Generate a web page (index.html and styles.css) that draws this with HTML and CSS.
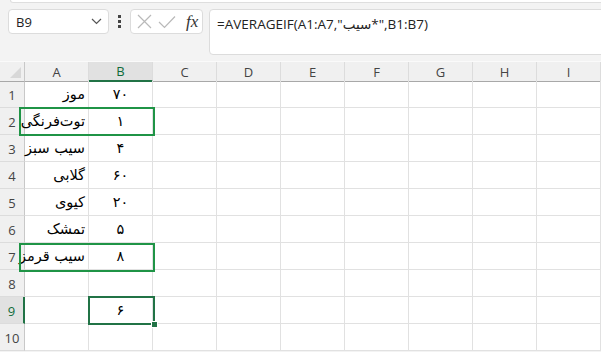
FILE: index.html
```html
<!DOCTYPE html>
<html lang="fa">
<head>
  <meta charset="UTF-8" />
  <title>AVERAGEIF</title>
  <link rel="stylesheet" href="styles.css">
</head>
<body>
  <div class="top-strip"></div>

  <div class="formula-bar">
    <div class="name-box">
      <span class="name-text">B9</span>
      <svg class="chevron" width="11" height="7" viewBox="0 0 11 7"><path d="M1 1 L5.5 5.5 L10 1" fill="none" stroke="#555" stroke-width="1.2"/></svg>
    </div>
    <div class="grip"><i></i><i></i><i></i></div>
    <div class="fx-box">
      <svg width="15" height="15" viewBox="0 0 15 15"><path d="M1 1 L14 14 M14 1 L1 14" stroke="#b9b9b9" stroke-width="1.2"/></svg>
      <svg width="18" height="14" viewBox="0 0 18 14"><path d="M1 7 L6.5 12.5 L17 1.5" fill="none" stroke="#b9b9b9" stroke-width="1.2"/></svg>
      <span class="fx">fx</span>
    </div>
    <div class="formula-input">=AVERAGEIF(A1:A7,"سیب*",B1:B7)</div>
  </div>

  <div class="sheet">
    <div class="row head">
      <div class="corner"><span class="tri"></span></div>
      <div class="ch">A</div>
      <div class="ch active">B</div>
      <div class="ch">C</div>
      <div class="ch">D</div>
      <div class="ch">E</div>
      <div class="ch">F</div>
      <div class="ch">G</div>
      <div class="ch">H</div>
      <div class="ch">I</div>
    </div>

    <div class="row">
      <div class="rh">1</div><div class="c a">موز</div><div class="c b">۷۰</div>
      <div class="c"></div><div class="c"></div><div class="c"></div><div class="c"></div><div class="c"></div><div class="c"></div><div class="c"></div>
    </div>
    <div class="row">
      <div class="rh">2</div><div class="c a">توت‌فرنگی</div><div class="c b">۱</div>
      <div class="c"></div><div class="c"></div><div class="c"></div><div class="c"></div><div class="c"></div><div class="c"></div><div class="c"></div>
    </div>
    <div class="row">
      <div class="rh">3</div><div class="c a">سیب سبز</div><div class="c b">۴</div>
      <div class="c"></div><div class="c"></div><div class="c"></div><div class="c"></div><div class="c"></div><div class="c"></div><div class="c"></div>
    </div>
    <div class="row">
      <div class="rh">4</div><div class="c a">گلابی</div><div class="c b">۶۰</div>
      <div class="c"></div><div class="c"></div><div class="c"></div><div class="c"></div><div class="c"></div><div class="c"></div><div class="c"></div>
    </div>
    <div class="row">
      <div class="rh">5</div><div class="c a">کیوی</div><div class="c b">۲۰</div>
      <div class="c"></div><div class="c"></div><div class="c"></div><div class="c"></div><div class="c"></div><div class="c"></div><div class="c"></div>
    </div>
    <div class="row">
      <div class="rh">6</div><div class="c a">تمشک</div><div class="c b">۵</div>
      <div class="c"></div><div class="c"></div><div class="c"></div><div class="c"></div><div class="c"></div><div class="c"></div><div class="c"></div>
    </div>
    <div class="row">
      <div class="rh">7</div><div class="c a">سیب قرمز</div><div class="c b">۸</div>
      <div class="c"></div><div class="c"></div><div class="c"></div><div class="c"></div><div class="c"></div><div class="c"></div><div class="c"></div>
    </div>
    <div class="row">
      <div class="rh">8</div><div class="c a"></div><div class="c b"></div>
      <div class="c"></div><div class="c"></div><div class="c"></div><div class="c"></div><div class="c"></div><div class="c"></div><div class="c"></div>
    </div>
    <div class="row">
      <div class="rh active">9</div><div class="c a"></div><div class="c b">۶</div>
      <div class="c"></div><div class="c"></div><div class="c"></div><div class="c"></div><div class="c"></div><div class="c"></div><div class="c"></div>
    </div>
    <div class="row">
      <div class="rh">10</div><div class="c a"></div><div class="c b"></div>
      <div class="c"></div><div class="c"></div><div class="c"></div><div class="c"></div><div class="c"></div><div class="c"></div><div class="c"></div>
    </div>

    <!-- drawn rectangles over the grid -->
    <div class="mark mark-row2"></div>
    <div class="mark mark-row7"></div>

    <!-- active cell B9 -->
    <div class="selection"><span class="handle"></span></div>
  </div>
</body>
</html>
```

FILE: styles.css
```css
* {
  box-sizing: border-box;
}

body {
  margin: 0;
  width: 601px;
  height: 352px;
  overflow: hidden;
  background: #f3f3f3;
  font-family: 'Open Sans', 'DejaVu Sans', sans-serif;
  color: #222;
}

.top-strip {
  height: 3px;
  margin: 0 -4px 0 10px;
  background: #fff;
  border: 1px solid #dedede;
  border-top: none;
  border-radius: 0 0 4px 4px;
}

.formula-bar {
  height: 58px;
  display: flex;
  align-items: flex-start;
  padding: 6px 0 0 8px;
}

.name-box {
  width: 101px;
  height: 25px;
  background: #fff;
  border: 1px solid #dcdcdc;
  border-radius: 4px;
  display: flex;
  align-items: center;
  justify-content: space-between;
  padding: 0 6px 0 7px;
}

.name-text {
  font-size: 13px;
  color: #222;
}

.grip {
  width: 21px;
  height: 25px;
  display: flex;
  flex-direction: column;
  align-items: center;
  justify-content: center;
  gap: 2px;
}

.grip i {
  width: 3px;
  height: 3px;
  background: #444;
}

.fx-box {
  width: 73px;
  height: 25px;
  background: #fff;
  border: 1px solid #dcdcdc;
  border-radius: 4px;
  display: flex;
  align-items: center;
  gap: 6px;
  padding: 0 0 0 6px;
}

.fx {
  font-family: 'Liberation Serif', serif;
  font-style: italic;
  font-size: 17px;
  color: #333;
  margin-left: 4px;
  line-height: 1;
}

.formula-input {
  flex: 1;
  height: 46px;
  margin-left: 6px;
  margin-right: -4px;
  background: #fff;
  border: 1px solid #dcdcdc;
  border-radius: 4px;
  padding: 5px 7px;
  font-size: 13.5px;
  color: #222;
  white-space: nowrap;
}

.sheet {
  position: relative;
  background: #fff;
}

.row {
  display: grid;
  grid-template-columns: 25px repeat(9, 64px);
  height: 27px;
}

.row.head {
  height: 20px;
  background: #f0f0f0;
  border-top: 1px solid #fafafa;
}

.corner {
  position: relative;
  border-right: 1px solid #c8c8c8;
  border-bottom: 1px solid #a8a8a8;
}

.corner .tri {
  position: absolute;
  right: 3px;
  bottom: 3px;
  width: 0;
  height: 0;
  border-left: 11px solid transparent;
  border-bottom: 11px solid #d8d8d8;
}

.ch {
  display: flex;
  align-items: center;
  justify-content: center;
  font-size: 13px;
  color: #444;
  border-right: 1px solid #dcdcdc;
  border-bottom: 1px solid #a8a8a8;
}

.ch.active {
  background: #e1e1e1;
  color: #0f6b3a;
  border-bottom: 2px solid #217346;
}

.rh {
  display: flex;
  align-items: center;
  justify-content: center;
  padding-top: 2px;
  font-size: 13px;
  color: #444;
  background: #f0f0f0;
  border-right: 1px solid #c8c8c8;
  border-bottom: 1px solid #dcdcdc;
}

.rh.active {
  background: #e1e1e1;
  color: #0f6b3a;
  border-right: 2px solid #217346;
}

.c {
  display: flex;
  align-items: center;
  border-right: 1px solid #e1e1e1;
  border-bottom: 1px solid #e1e1e1;
  font-family: 'DejaVu Sans', sans-serif;
  font-size: 14.5px;
  color: #000;
  white-space: nowrap;
}

.c.a {
  direction: rtl;
  justify-content: flex-start;
  padding-right: 3px;
}

.c.b {
  justify-content: center;
}

.mark {
  position: absolute;
  left: 19px;
  width: 136px;
  height: 29px;
  border: 2px solid #1f9446;
}

.mark-row2 {
  top: 46px;
}

.mark-row7 {
  top: 182px;
}

.selection {
  position: absolute;
  left: 88px;
  top: 235px;
  width: 67px;
  height: 29px;
  border: 2px solid #217346;
}

.handle {
  position: absolute;
  right: -5px;
  bottom: -5px;
  width: 7px;
  height: 7px;
  background: #217346;
  border: 1px solid #fff;
}
```
